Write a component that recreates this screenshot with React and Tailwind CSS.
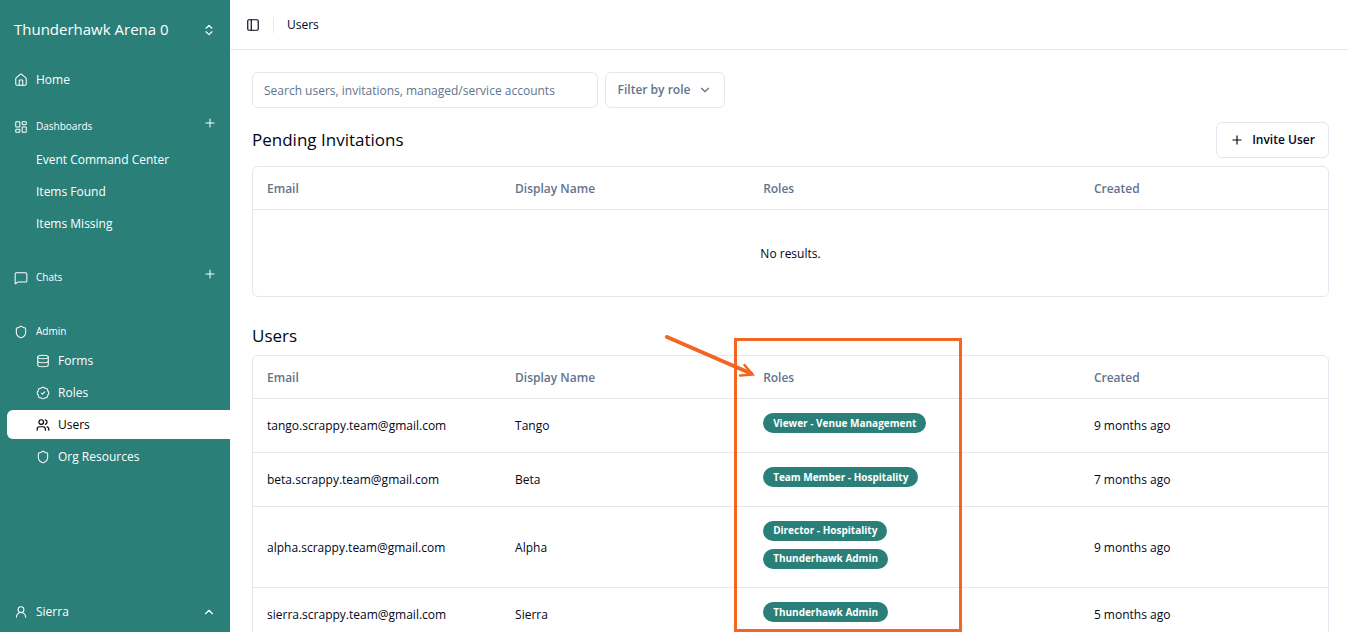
import React from 'react';
import {
  BadgeCheck,
  ChevronDown,
  ChevronsUpDown,
  ChevronUp,
  Database,
  House,
  LayoutDashboard,
  MessageSquare,
  PanelLeft,
  Plus,
  Shield,
  UserRound,
  Users,
} from 'lucide-react';

const dashboards = ['Event Command Center', 'Items Found', 'Items Missing'];

const adminLinks = [
  { label: 'Forms', icon: Database },
  { label: 'Roles', icon: BadgeCheck },
  { label: 'Users', icon: Users, active: true },
  { label: 'Org Resources', icon: Shield },
];

const users = [
  { email: 'tango.scrappy.team@gmail.com', name: 'Tango', roles: ['Viewer - Venue Management'], created: '9 months ago' },
  { email: 'beta.scrappy.team@gmail.com', name: 'Beta', roles: ['Team Member - Hospitality'], created: '7 months ago' },
  { email: 'alpha.scrappy.team@gmail.com', name: 'Alpha', roles: ['Director - Hospitality', 'Thunderhawk Admin'], created: '9 months ago' },
  { email: 'sierra.scrappy.team@gmail.com', name: 'Sierra', roles: ['Thunderhawk Admin'], created: '5 months ago' },
];

const SectionLabel = ({ icon: Icon, label, addLabel }) => (
  <div className="flex h-[29px] items-center gap-2 px-[14px] text-[10px] font-medium">
    <Icon className="h-[14px] w-[14px]" strokeWidth={1.75} />
    <h2 className="grow">{label}</h2>
    {addLabel && (
      <button type="button" aria-label={addLabel} className="-mr-px mb-2">
        <Plus className="h-[14px] w-[14px]" strokeWidth={1.75} />
      </button>
    )}
  </div>
);

const Sidebar = () => (
  <aside className="flex w-[230px] shrink-0 flex-col bg-[#2a7f79] text-[12px] text-white">
    <button type="button" className="flex h-[59px] items-center justify-between px-[14px] text-left text-[15px]">
      Thunderhawk Arena 0
      <ChevronsUpDown className="h-[14px] w-[14px]" />
    </button>

    <nav className="flex grow flex-col pt-[6px]">
      <a href="#home" className="flex h-[29px] items-center gap-2 px-[14px]">
        <House className="h-[14px] w-[14px]" strokeWidth={1.75} />
        Home
      </a>

      <div className="mt-[18px]">
        <SectionLabel icon={LayoutDashboard} label="Dashboards" addLabel="Add dashboard" />
        <ul className="mt-1 flex flex-col gap-[3px]">
          {dashboards.map((label) => (
            <li key={label}>
              <a href="#dashboard" className="flex h-[29px] items-center pl-9">
                {label}
              </a>
            </li>
          ))}
        </ul>
      </div>

      <div className="mt-[25px]">
        <SectionLabel icon={MessageSquare} label="Chats" addLabel="Add chat" />
      </div>

      <div className="mt-[25px]">
        <SectionLabel icon={Shield} label="Admin" />
        <ul className="flex flex-col gap-[3px] pl-[7px]">
          {adminLinks.map(({ label, icon: Icon, active }) => (
            <li key={label}>
              <a
                href="#admin"
                className={`flex h-[29px] items-center gap-2 rounded-l-md pl-[29px] ${active ? 'bg-white font-medium text-black' : ''}`}
              >
                <Icon className="h-[14px] w-[14px]" strokeWidth={active ? 2 : 1.75} />
                {label}
              </a>
            </li>
          ))}
        </ul>
      </div>
    </nav>

    <button type="button" className="flex h-[41px] items-center gap-2 px-[14px] text-left">
      <UserRound className="h-[14px] w-[14px]" strokeWidth={1.75} />
      <span className="grow">Sierra</span>
      <ChevronUp className="h-[14px] w-[14px]" />
    </button>
  </aside>
);

const DataTable = ({ label, children }) => (
  <div className="overflow-hidden rounded-md border border-slate-200">
    <table aria-label={label} className="w-full table-fixed text-left">
      <thead>
        <tr className="h-[42px] border-b border-slate-200 text-slate-500">
          <th className="w-3/13 px-[14px] pt-[3px] font-semibold">Email</th>
          <th className="w-3/13 px-[14px] pt-[3px] font-semibold">Display Name</th>
          <th className="w-4/13 px-[14px] pt-[3px] font-semibold">Roles</th>
          <th className="w-3/13 px-[14px] pt-[3px] font-semibold">Created</th>
        </tr>
      </thead>
      <tbody>{children}</tbody>
    </table>
  </div>
);

const RoleBadge = ({ role }) => (
  <li className="flex h-5 items-center rounded-full bg-[#2a7f79] px-[10px] text-[10px] font-bold text-white">
    {role}
  </li>
);

// Callout that points at the roles column, drawn over the page
const RolesCallout = () => (
  <div className="pointer-events-none absolute inset-0">
    <div className="absolute top-[338px] bottom-0 left-[504px] w-[228px] border-3 border-[#f26522]" />
    <svg
      className="absolute top-[330px] left-[430px]"
      width="100"
      height="54"
      viewBox="0 0 100 54"
      fill="none"
      stroke="#f26522"
      strokeLinecap="round"
    >
      <path d="M7 7 L91 43.500" strokeWidth="4" />
      <path d="M84.500 35 L92.500 44.500 L80 45.500" strokeWidth="2.500" />
    </svg>
  </div>
);

export default function App() {
  return (
    <div className="flex h-screen overflow-hidden bg-white font-['Open_Sans','Noto_Sans',sans-serif] text-[12px] text-slate-950">
      <Sidebar />

      <main className="relative min-w-0 grow overflow-hidden">
        <header className="flex h-[50px] items-center border-b border-slate-200 px-4">
          <button type="button" aria-label="Toggle sidebar">
            <PanelLeft className="h-[14px] w-[14px]" />
          </button>
          <span className="mx-[13px] h-4 w-px bg-slate-200" />
          <h1 className="pt-px">Users</h1>
        </header>

        <div className="pt-[22px] pr-[19px] pl-[22px]">
          <div className="flex gap-[7px]">
            <input
              type="search"
              aria-label="Search users"
              placeholder="Search users, invitations, managed/service accounts"
              className="h-9 w-[346px] rounded-md border border-slate-200 px-[11px] placeholder:text-slate-500"
            />
            <button
              type="button"
              className="flex h-9 w-[120px] items-center justify-center gap-2 rounded-md border border-slate-200 font-semibold text-slate-500"
            >
              Filter by role
              <ChevronDown className="h-[14px] w-[14px]" />
            </button>
          </div>

          <section className="mt-[14px]">
            <div className="mb-2 flex items-center justify-between">
              <h2 className="text-[17px]">Pending Invitations</h2>
              <button
                type="button"
                className="flex h-9 w-[113px] items-center justify-center gap-2 rounded-md border border-slate-200 font-semibold"
              >
                <Plus className="h-[14px] w-[14px]" />
                Invite User
              </button>
            </div>
            <DataTable label="Pending Invitations">
              <tr className="h-[87px]">
                <td colSpan={4} className="pt-[2px] text-center">
                  No results.
                </td>
              </tr>
            </DataTable>
          </section>

          <section className="mt-[27px]">
            <h2 className="mb-[7px] text-[17px] leading-6">Users</h2>
            <DataTable label="Users">
              {users.map(({ email, name, roles, created }) => (
                <tr key={email} className="h-[54px] border-b border-slate-200">
                  <td className="px-[14px] pt-[2px]">{email}</td>
                  <td className="px-[14px] pt-[2px]">{name}</td>
                  <td className="px-[14px] py-[14px]">
                    <ul className="flex flex-col items-start gap-2 pb-1">
                      {roles.map((role) => (
                        <RoleBadge key={role} role={role} />
                      ))}
                    </ul>
                  </td>
                  <td className="px-[14px] pt-[2px]">{created}</td>
                </tr>
              ))}
            </DataTable>
          </section>
        </div>

        <RolesCallout />
      </main>
    </div>
  );
}
